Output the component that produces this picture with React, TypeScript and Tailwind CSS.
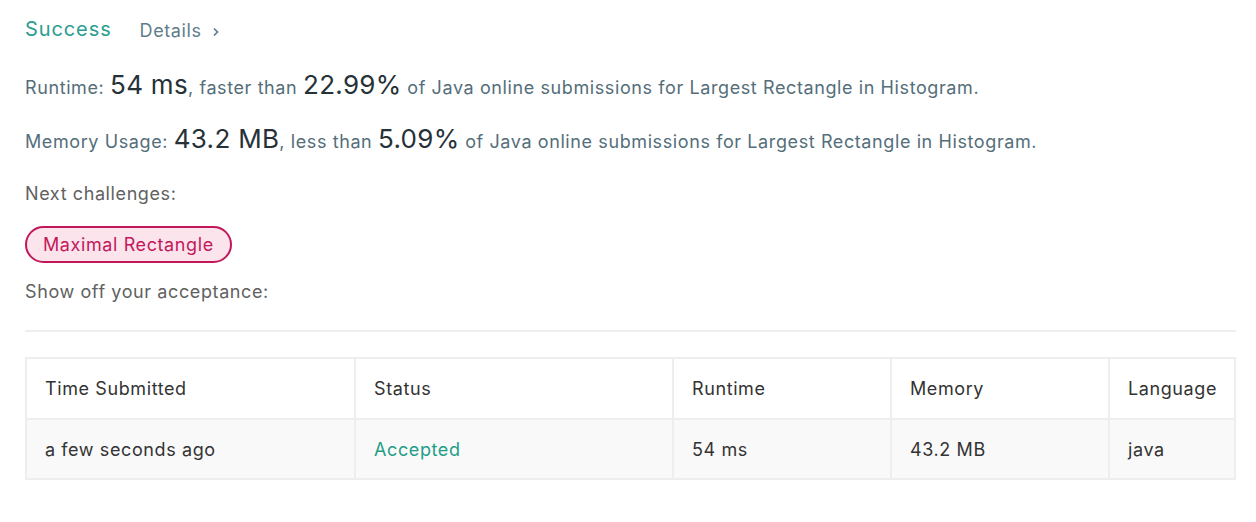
const font = "font-['Inter','Helvetica_Neue',Arial,sans-serif]";

const Big = ({ children }: { children: React.ReactNode }) => (
  <span className="text-[26px] leading-none tracking-[0.3px] text-[#263238]">{children}</span>
);

const cols = [
  { label: "Time Submitted", value: "a few seconds ago", w: "w-[327px] shrink-0" },
  { label: "Status", value: "Accepted", w: "w-[318px] shrink-0", accent: true },
  { label: "Runtime", value: "54 ms", w: "w-[218px] shrink-0" },
  { label: "Memory", value: "43.2 MB", w: "w-[218px] shrink-0" },
  { label: "Language", value: "java", w: "flex-1" },
];

export default function App() {
  return (
    <div className={`${font} min-h-[522px] w-[1256px] bg-white pl-[25px] pr-[20px] pt-[14px] tracking-[0.6px]`}>
      <div className="flex h-[30px] items-center gap-[28px]">
        <span className="text-[20px] leading-[30px] tracking-[0.9px] text-[#2a9d8f]">Success</span>
        <span className="mt-[2px] flex items-center gap-[10px] text-[18px] text-[#607d8b]">
          Details
          <svg width="8" height="12" viewBox="0 0 8 12" className="mt-[3px]">
            <path d="M2 2.5 L5.5 6 L2 9.5" fill="none" stroke="#607d8b" strokeWidth="1.7" />
          </svg>
        </span>
      </div>

      <p className="mt-[28px] text-[18px] leading-[32px] text-[#546e7a]">
        Runtime: <Big>54 ms</Big>, faster than <Big>22.99%</Big> of Java online submissions for Largest Rectangle in Histogram.
      </p>
      <p className="mt-[22px] text-[18px] leading-[32px] text-[#546e7a]">
        Memory Usage: <Big>43.2 MB</Big>, less than <Big>5.09%</Big> of Java online submissions for Largest Rectangle in Histogram.
      </p>

      <p className="mt-[24px] text-[18px] leading-[24px] text-[#616161]">Next challenges:</p>
      <div className="mt-[20px] flex">
        <span className="flex h-[37px] items-center rounded-full border-2 border-[#c2185b] bg-[#fce4ec] px-[16px] text-[18px] text-[#c2185b]">
          Maximal Rectangle
        </span>
      </div>
      <p className="mt-[17px] text-[18px] leading-[24px] text-[#616161]">Show off your acceptance:</p>

      <div className="mt-[26px] h-[2px] bg-[#eeeeee]" />

      <div className="mt-[25px] border-2 border-[#eeeeee] text-[18px] text-[#333]">
        <div className="flex h-[59px]">
          {cols.map((c, i) => (
            <div key={c.label} className={`${c.w} flex items-center px-[18px] ${i > 0 ? "border-l-2 border-[#eeeeee]" : ""}`}>
              {c.label}
            </div>
          ))}
        </div>
        <div className="flex h-[60px] border-t-2 border-[#eeeeee] bg-[#f9f9f9]">
          {cols.map((c, i) => (
            <div
              key={c.label}
              className={`${c.w} flex items-center px-[18px] ${i > 0 ? "border-l-2 border-[#eeeeee]" : ""} ${c.accent ? "text-[#1e9e88]" : ""}`}
            >
              {c.value}
            </div>
          ))}
        </div>
      </div>
    </div>
  );
}
